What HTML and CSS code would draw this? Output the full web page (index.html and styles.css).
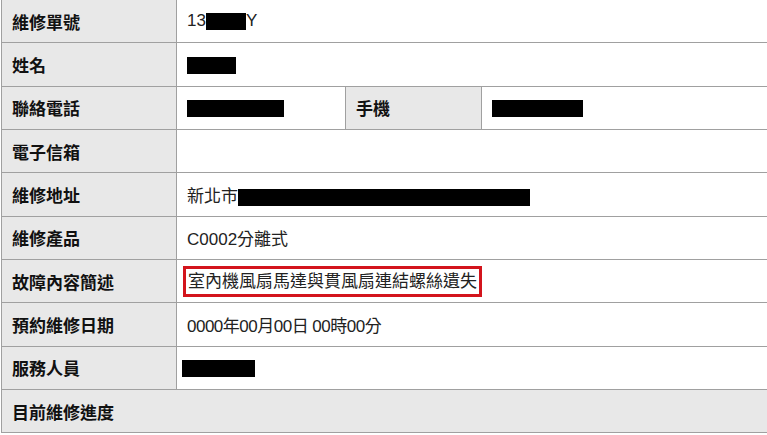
FILE: index.html
```html
<!DOCTYPE html>
<html lang="zh-Hant">
<head>
    <meta charset="UTF-8">
    <title>維修單</title>
    <link rel="stylesheet" href="styles.css">
</head>
<body>
    <table class="repair">
        <colgroup>
            <col class="c-label">
            <col class="c-phone">
            <col class="c-mlabel">
            <col class="c-mobile">
        </colgroup>
        <tr>
            <th>維修單號</th>
            <td colspan="3">13<span class="mask" style="width:40px"></span>Y</td>
        </tr>
        <tr>
            <th>姓名</th>
            <td colspan="3"><span class="mask" style="width:49px"></span></td>
        </tr>
        <tr>
            <th>聯絡電話</th>
            <td><span class="mask" style="width:97px"></span></td>
            <th>手機</th>
            <td><span class="mask" style="width:91px"></span></td>
        </tr>
        <tr>
            <th>電子信箱</th>
            <td colspan="3"></td>
        </tr>
        <tr>
            <th>維修地址</th>
            <td colspan="3">新北市<span class="mask" style="width:292px"></span></td>
        </tr>
        <tr>
            <th>維修產品</th>
            <td colspan="3">C0002分離式</td>
        </tr>
        <tr>
            <th>故障內容簡述</th>
            <td colspan="3" class="mark-cell"><span class="mark">室內機風扇馬達與貫風扇連結螺絲遺失</span></td>
        </tr>
        <tr>
            <th>預約維修日期</th>
            <td colspan="3" class="date">0000年00月00日 00時00分</td>
        </tr>
        <tr>
            <th>服務人員</th>
            <td colspan="3" class="staff"><span class="mask" style="width:73px"></span></td>
        </tr>
        <tr>
            <th colspan="4">目前維修進度</th>
        </tr>
    </table>
</body>
</html>
```

FILE: styles.css
```css
body {
    margin: 0;
    font-family: "Liberation Sans", "Noto Sans CJK TC", sans-serif;
    font-size: 17px;
    color: #222;
    background: #fff;
}
.repair {
    margin: -1px 0 0 1px;
    width: 766px;
    table-layout: fixed;
    border-collapse: collapse;
    border: 1px solid #a0a0a0;
}
.c-label { width: 175px; }
.c-phone { width: 169px; }
.c-mlabel { width: 136px; }
.c-mobile { width: 286px; }
th, td {
    border: 1px solid #a0a0a0;
    height: 43.33px;
    box-sizing: border-box;
    padding: 0 10px;
    text-align: left;
    vertical-align: middle;
    white-space: nowrap;
}
th {
    background-color: #e8e8e8;
    font-family: "Noto Sans CJK TC", sans-serif;
    font-weight: bold;
    font-size: 17px;
    color: #111;
}
.mask {
    display: inline-block;
    height: 17px;
    background: #000;
    vertical-align: middle;
}
.mark-cell {
    padding-left: 6px;
}
.mark {
    display: inline-block;
    border: 3px solid #d3141c;
    padding: 0 2px;
    line-height: 25px;
}
.date {
    letter-spacing: -0.5px;
}
.staff {
    padding-left: 5px;
}
```
